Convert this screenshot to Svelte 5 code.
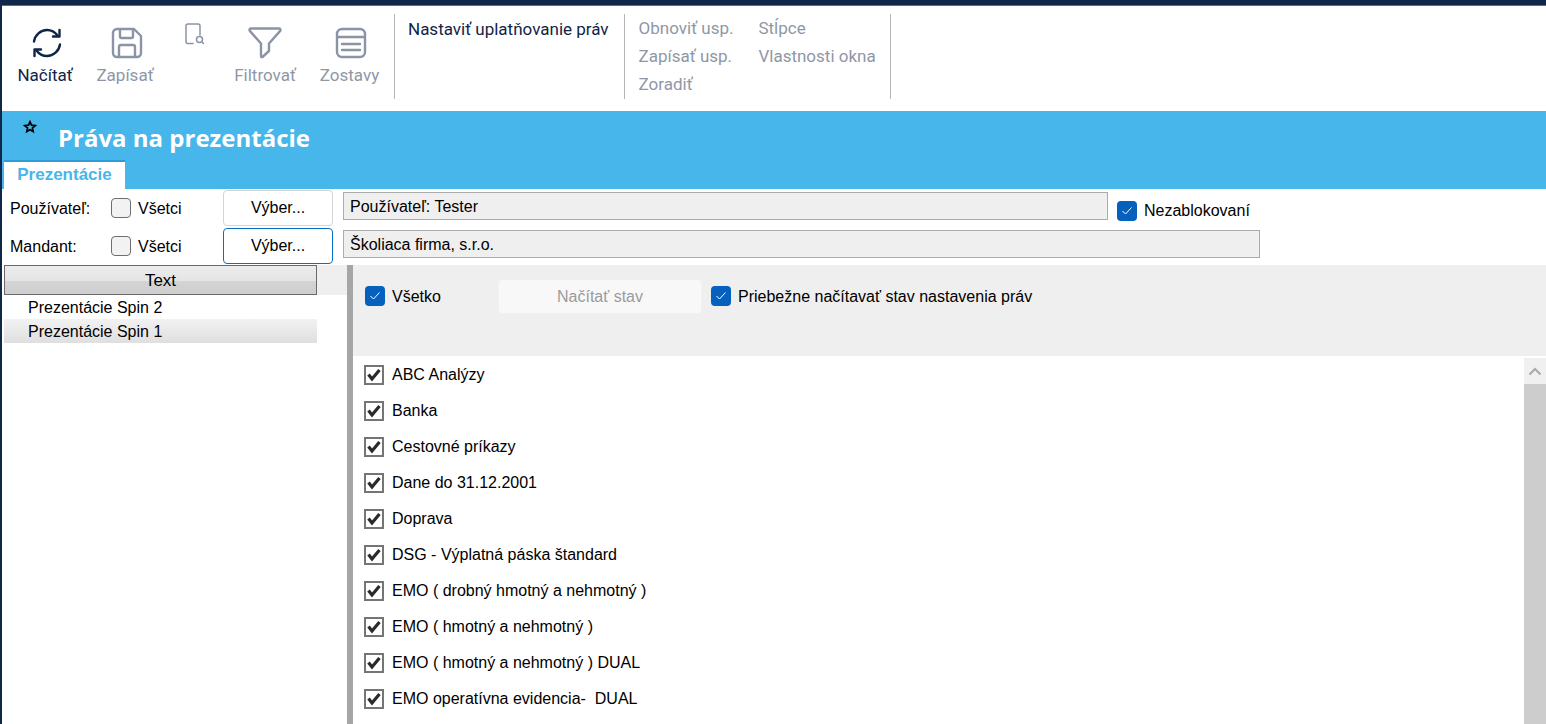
<script>
  const items = ['ABC Analýzy','Banka','Cestovné príkazy','Dane do 31.12.2001','Doprava','DSG - Výplatná páska štandard','EMO ( drobný hmotný a nehmotný )','EMO ( hmotný a nehmotný )','EMO ( hmotný a nehmotný ) DUAL','EMO operatívna evidencia-  DUAL'];
</script>

<div class="app">
  <header class="toolbar">
    <div class="tools">
      <div class="tool w80 on">
        <svg class="nudge" width="32" height="32" viewBox="0 0 32 32" fill="none" stroke="#0f2547" stroke-width="2.4" stroke-linecap="round" stroke-linejoin="round">
          <path d="M3 14.5C4 8 9.500 3 16 3c4.500 0 8 2 10.500 5.500"/><path d="M28.500 3v6.500h-6.500"/>
          <path d="M29 17.500C28 24 22.500 29 16 29c-4.500 0-8-2-10.500-5.500"/><path d="M3.500 29v-6.500h6.500"/>
        </svg>
        <span>Načítať</span>
      </div>
      <div class="tool w80">
        <svg class="nudge" width="32" height="32" viewBox="0 0 32 32" fill="none" stroke="#8a94a6" stroke-width="2.4" stroke-linejoin="round">
          <path d="M6 2h17l7 7v17a4 4 0 0 1-4 4H6a4 4 0 0 1-4-4V6a4 4 0 0 1 4-4z"/><path d="M9 2.500v7a1.500 1.500 0 0 0 1.500 1.500h10a1.500 1.500 0 0 0 1.500-1.500v-7"/><path d="M8 30V20a2 2 0 0 1 2-2h12a2 2 0 0 1 2 2v10"/>
        </svg>
        <span>Zapísať</span>
      </div>
      <div class="tool w60 small">
        <svg width="20" height="22" viewBox="0 0 20 22" fill="none" stroke="#8a94a6" stroke-width="1.500" stroke-linecap="round">
          <path d="M15 12V3a2 2 0 0 0-2-2H3a2 2 0 0 0-2 2v16a1.500 1.500 0 0 0 1.500 1.500H8"/><circle cx="14.500" cy="16.500" r="3"/><path d="M17 19l1.500 1.500"/>
        </svg>
      </div>
      <div class="tool w80">
        <svg width="34" height="32" viewBox="0 0 34 32" fill="none" stroke="#8a94a6" stroke-width="2.400" stroke-linejoin="round">
          <path d="M3 1.500h28a1.500 1.500 0 0 1 1.200 2.400L21 16.500V24l-6.500 6c-.6.400-1.500 0-1.500-.8V16.500L1.800 3.900A1.500 1.500 0 0 1 3 1.500z"/>
        </svg>
        <span>Filtrovať</span>
      </div>
      <div class="tool w89">
        <svg class="nudge" width="32" height="32" viewBox="0 0 32 32" fill="none" stroke="#8a94a6" stroke-width="2.400" stroke-linecap="round">
          <rect x="2" y="2" width="28" height="28" rx="5"/><path d="M2.500 10h27M7 17h18M7 23h18"/>
        </svg>
        <span>Zostavy</span>
      </div>
    </div>
    <div class="group g1"><span class="on">Nastaviť uplatňovanie práv</span></div>
    <div class="group g2">
      <div class="col"><span>Obnoviť usp.</span><span>Zapísať usp.</span><span>Zoradiť</span></div>
      <div class="col"><span>Stĺpce</span><span>Vlastnosti okna</span></div>
    </div>
  </header>

  <section class="banner">
    <div class="title-row">
      <svg class="star" width="14" height="14" viewBox="0 0 14 14" fill="none" stroke="#000" stroke-width="1.700" stroke-linejoin="miter">
        <path d="M7 1.800l1.500 3.400 3.700.4-2.800 2.400.8 3.600L7 9.700l-3.200 1.900.8-3.600-2.800-2.400 3.700-.4z"/>
      </svg>
      <h1>Práva na prezentácie</h1>
    </div>
    <div class="tab">Prezentácie</div>
  </section>

  <section class="filters">
    <div class="frow">
      <label class="lbl">Používateľ:</label>
      <span class="cb empty"></span><span class="cbt">Všetci</span>
      <button class="pick">Výber...</button>
      <div class="ro w1">Používateľ: Tester</div>
      <span class="cb blue nez"><svg width="12" height="10" viewBox="0 0 12 10" fill="none" stroke="#fff" stroke-width="1"><path d="M1.500 5l3 3 6-6.500"/></svg></span>
      <span class="nezt">Nezablokovaní</span>
    </div>
    <div class="frow r2">
      <label class="lbl">Mandant:</label>
      <span class="cb empty"></span><span class="cbt">Všetci</span>
      <button class="pick focus">Výber...</button>
      <div class="ro w2">Školiaca firma, s.r.o.</div>
    </div>
  </section>

  <main class="main">
    <aside class="left">
      <div class="lhead"><div class="hcell">Text</div></div>
      <div class="lrow">Prezentácie Spin 2</div>
      <div class="lrow sel">Prezentácie Spin 1</div>
    </aside>
    <div class="split"></div>
    <div class="right">
      <div class="panel">
        <span class="cb blue"><svg width="12" height="10" viewBox="0 0 12 10" fill="none" stroke="#fff" stroke-width="1"><path d="M1.500 5l3 3 6-6.500"/></svg></span>
        <span class="all">Všetko</span>
        <button class="load">Načítať stav</button>
        <span class="cb blue"><svg width="12" height="10" viewBox="0 0 12 10" fill="none" stroke="#fff" stroke-width="1"><path d="M1.500 5l3 3 6-6.500"/></svg></span>
        <span class="live">Priebežne načítavať stav nastavenia práv</span>
      </div>
      <div class="listwrap">
        <ul class="list">
          {#each items as it}
            <li>
              <span class="chk"><svg width="16" height="14" viewBox="0 0 16 14" fill="none" stroke="#2a2a2a" stroke-width="3.200"><path d="M2.500 6.500l3.500 4.500L13.500 2"/></svg></span>
              <span class="ittext">{it}</span>
            </li>
          {/each}
        </ul>
        <div class="sb">
          <div class="up"><svg width="14" height="9" viewBox="0 0 14 9" fill="none" stroke="#a8a8a8" stroke-width="2"><path d="M1.500 7.500L7 2l5.500 5.500"/></svg></div>
          <div class="track"></div>
        </div>
      </div>
    </div>
  </main>
</div>

<style>
  :global(body) { margin: 0; background: #fff; overflow: hidden; }
  .app {
    width: 1546px; height: 724px; box-sizing: border-box; overflow: hidden;
    border-left: 2px solid #10264a; border-top: 5px solid #10264a;
    display: flex; flex-direction: column;
    font-family: "Liberation Sans", Arial, sans-serif; font-size: 16px; color: #000;
  }
  .toolbar {
    height: 106px; flex: none; display: flex; box-sizing: border-box; padding-top: 8px;
    border-top: 1px solid #5c6b80; font-family: Roboto, sans-serif; font-size: 17px; color: #8f97a6;
  }
  .toolbar .on { color: #0f2547; }
  .tools { display: flex; align-items: flex-start; padding-left: 3px; }
  .tool { display: flex; flex-direction: column; align-items: center; padding-top: 13px; height: 85px; box-sizing: border-box; }
  .tool span { margin-top: 6px; line-height: 20px; white-space: nowrap; }
  .nudge { margin-left: 3px; }
  .w80 { width: 80px; } .w60 { width: 60px; } .w89 { width: 89px; }
  .small { padding-top: 9px; }
  .group { height: 85px; border-left: 1px solid #b5b5b5; box-sizing: border-box; white-space: nowrap; }
  .g1 { padding: 0 15px 0 13px; }
  .g1 span { display: block; line-height: 30px; }
  .g2 { display: flex; gap: 25px; padding: 0 14px 0 14px; border-right: 1px solid #b5b5b5; }
  .col { display: flex; flex-direction: column; }
  .col span { line-height: 28px; }

  .banner { height: 78px; flex: none; background: #47b6ea; display: flex; flex-direction: column; justify-content: space-between; }
  .title-row { display: flex; align-items: flex-start; }
  .star { margin: 9px 0 0 21px; }
  h1 { margin: 13px 0 0 21px; color: #fff; font: 700 24px/28px "Open Sans", sans-serif; }
  .tab {
    margin-left: 2px; width: 121px; height: 29px; box-sizing: border-box; background: #fff;
    border-top: 2px solid #2e9ad6; color: #47b6ea; font-weight: 700; font-size: 17px; line-height: 26px; text-align: center;
  }

  .filters { height: 76px; flex: none; font-size: 16px; }
  .frow { height: 38px; display: flex; align-items: center; }
  .lbl { width: 101px; padding-left: 8px; box-sizing: border-box; flex: none; margin-top: 1px; }
  .cb { width: 20px; height: 20px; box-sizing: border-box; border-radius: 4px; flex: none; display: flex; align-items: center; justify-content: center; }
  .cb.empty { margin-left: 8px; background: #f2f2f2; border: 1px solid #6e6e6e; }
  .cb.blue { background: #0561bd; }
  .cbt { width: 92px; padding-left: 7px; box-sizing: border-box; flex: none; margin-top: 1px; }
  .pick {
    width: 110px; height: 36px; padding: 0; flex: none; background: #fff; border: 1px solid #d5d5d5; border-radius: 4px;
    font: inherit; font-size: 16px; color: #000; margin-right: 10px; 
  }
  .pick.focus { border-color: #0a70c4; }
  .ro {
    height: 28px; margin-bottom: 4px; box-sizing: border-box; border: 1px solid #ababab; background: #efefef; padding-left: 6px;
    line-height: 28px; font-size: 16px; flex: none;
  }
  .w1 { width: 765px; } .w2 { width: 917px; }
  .nez { margin-left: 9px; margin-top: 6px; }
  .nezt { margin-left: 7px; margin-top: 5px; }

  .main { flex: 1; display: flex; min-height: 0; font-size: 16px; }
  .left { width: 343px; margin-left: 2px; flex: none; }
  .lhead { height: 30px; background: #efefef; }
  .hcell {
    width: 313px; height: 30px; box-sizing: border-box; border: 1px solid #6a6a6a; text-align: center; line-height: 30px; font-size: 17px;
    background: linear-gradient(#ececec 0, #e4e4e4 53%, #d4d4d4 53%, #cecece 100%);
  }
  .lrow { width: 313px; height: 24px; line-height: 26px; padding-left: 24px; box-sizing: border-box; }
  .lrow.sel { background: linear-gradient(#f2f2f2, #dfdfdf); }
  .split { width: 6px; background: #a6a6a6; flex: none; }
  .right { flex: 1; min-width: 0; display: flex; flex-direction: column; }
  .panel { height: 91px; flex: none; background: #efefef; display: flex; align-items: flex-start; padding: 21px 0 0 12px; box-sizing: border-box; font-size: 16px; }
  .all { width: 113px; padding-left: 7px; box-sizing: border-box; line-height: 22px; }
  .load { width: 204px; height: 35px; margin: -7px 9px 0 0; border: 1px solid #f1f1f1; border-radius: 4px; background: #f8f8f8; color: #9b9b9b; font: inherit; padding: 0; }
  .live { margin-left: 7px; line-height: 22px; }
  .listwrap { flex: 1; display: flex; min-height: 0; padding-top: 2px; }
  .list { list-style: none; margin: -1px 0 0; padding: 0 0 0 11px; flex: 1; font-size: 16px; overflow: hidden; }
  .list li { height: 36px; display: flex; align-items: center; }
  .chk { width: 20px; height: 20px; box-sizing: border-box; border: 2px solid #757575; background: #fff; display: flex; align-items: center; justify-content: center; }
  .ittext { margin: -1px 0 0 8px; white-space: pre; }
  .sb { width: 22px; flex: none; display: flex; flex-direction: column; }
  .up { height: 26px; background: #f0f0f0; display: flex; align-items: center; justify-content: center; }
  .track { flex: 1; background: #cdcdcd; }
</style>
